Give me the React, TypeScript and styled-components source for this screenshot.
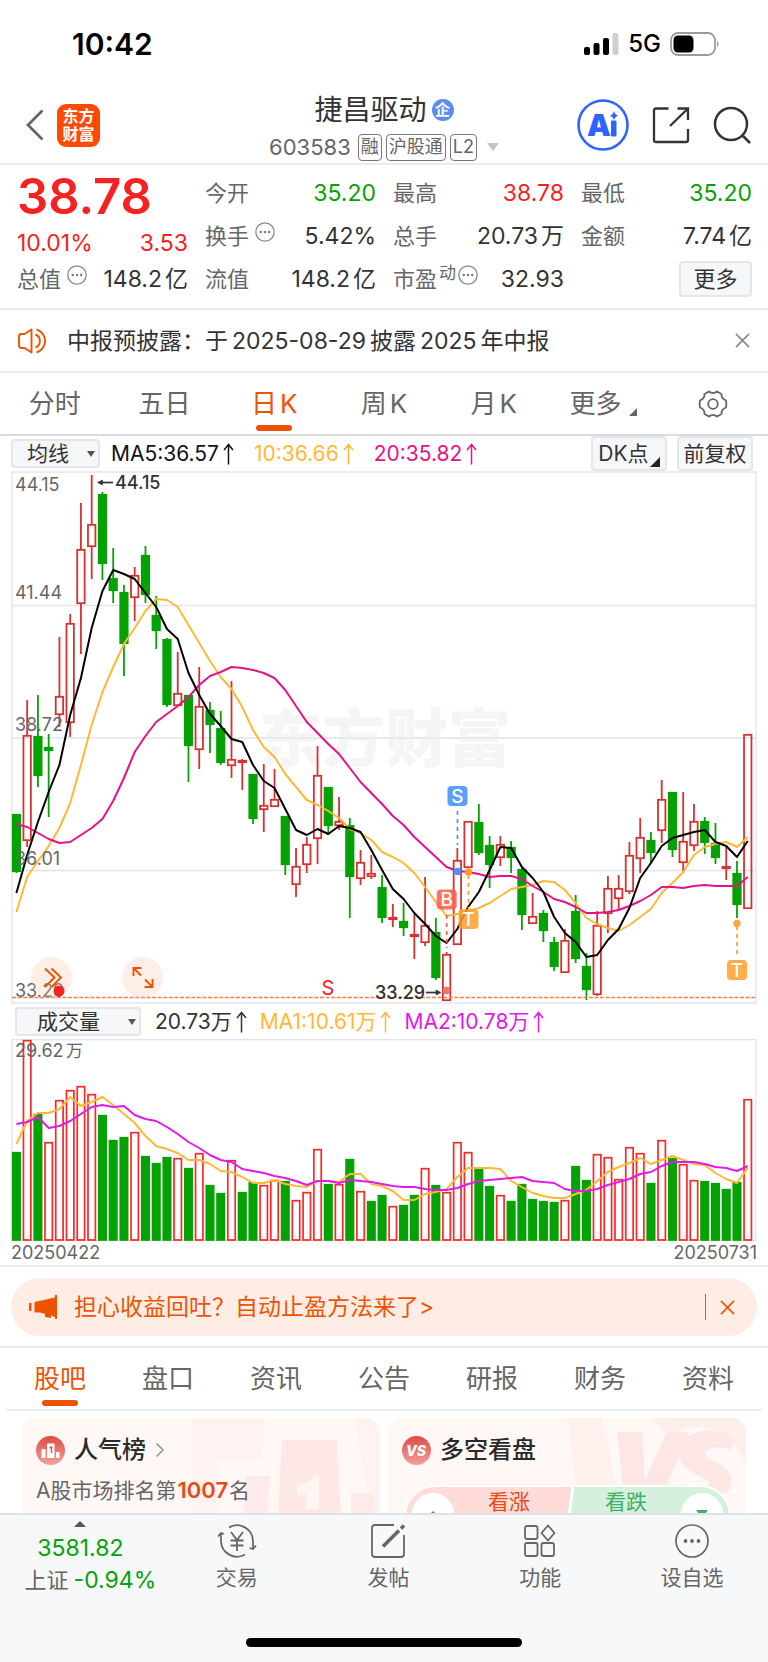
import React from "react";
import styled, { createGlobalStyle, css } from "styled-components";

const RED = "#f52222";
const GREEN = "#05a205";
const ORANGE = "#ee5400";
const AMBER = "#ffb836";
const PINK = "#e6128a";
const PURPLE = "#e21ae8";
const INK = "#333333";
const MUTED = "#666666";

const GlobalStyle = createGlobalStyle`
  * { box-sizing: border-box; }
  body {
    margin: 0;
    background: #ffffff;
    color: ${INK};
    font-family: Inter, "Noto Sans CJK SC", sans-serif;
    font-size: 22px;
    line-height: 30px;
  }
  button, select {
    margin: 0;
    padding: 0;
    border: 0;
    background: none;
    color: inherit;
    font: inherit;
    cursor: pointer;
  }
  a { color: inherit; text-decoration: none; }
  svg { display: block; flex: none; }
  h1, h2, p { margin: 0; font: inherit; }
`;

const Page = styled.div`
  min-height: 100vh;
  display: flex;
  flex-direction: column;
  white-space: nowrap;
  overflow: hidden;
`;

/* ---------- status bar and header ---------- */

const StatusBar = styled.div`
  display: flex;
  align-items: center;
  justify-content: space-between;
  height: 86px;
  padding: 2px 48px 0 72px;
  color: #000000;
`;

const Clock = styled.time`
  font-size: 30px;
  font-weight: 600;
`;

const StatusIcons = styled.div`
  display: flex;
  align-items: center;
  gap: 9px;
  font-size: 24px;
  font-weight: 500;
`;

const Header = styled.header`
  display: grid;
  grid-template-columns: 1fr auto 1fr;
  align-items: center;
  height: 79px;
  padding: 0 17px;
  border-bottom: 2px solid #ececee;
`;

const HeaderSide = styled.div<{ $end?: boolean }>`
  display: flex;
  align-items: center;
  gap: ${(p) => (p.$end ? "23px" : "13px")};
  padding-left: ${(p) => (p.$end ? "0" : "9px")};
  justify-content: ${(p) => (p.$end ? "flex-end" : "flex-start")};
`;

const BrandMark = styled.a`
  display: grid;
  place-content: center;
  width: 43px;
  height: 43px;
  border-radius: 9px;
  background: #ff4a05;
  color: #ffffff;
  font-size: 16px;
  font-weight: 700;
  line-height: 18px;
`;

const TitleBlock = styled.div`
  display: flex;
  flex-direction: column;
  align-items: center;
  padding-top: 4px;
`;

const StockTitle = styled.h1`
  display: flex;
  align-items: center;
  gap: 5px;
  font-size: 28px;
  line-height: 40px;
`;

const CompanyBadge = styled.span`
  display: grid;
  place-content: center;
  width: 22px;
  height: 22px;
  border-radius: 50%;
  background: #5b8eea;
  color: #ffffff;
  font-size: 15px;
  font-weight: 700;
  line-height: 20px;
`;

const CodeRow = styled.div`
  display: flex;
  align-items: center;
  gap: 4px;
  height: 34px;
  color: ${MUTED};
`;

const StockCode = styled.span`
  margin-right: 3px;
  font-size: 22px;
`;

const Tag = styled.span`
  height: 27px;
  padding: 0 2px;
  border: 1px solid #777777;
  border-radius: 4px;
  font-size: 18px;
  line-height: 24px;
`;

const Triangle = styled.span<{ $color: string; $up?: boolean; $size: number }>`
  width: 0;
  height: 0;
  border: ${(p) => p.$size}px solid transparent;
  ${(p) =>
    p.$up
      ? css`border-top: 0; border-bottom-color: ${p.$color};`
      : css`border-bottom: 0; border-top: ${p.$size + 2}px solid ${p.$color};`}
`;

const CodeToggle = styled.button`
  margin-left: 6px;
  display: flex;
`;

/* ---------- quotes ---------- */

const Quotes = styled.section`
  display: grid;
  grid-template-columns: repeat(4, 1fr);
  grid-auto-rows: 43px;
  column-gap: 17px;
  padding: 6px 16px 8px 17px;
  border-bottom: 2px solid #ececee;
`;

const PriceCell = styled.div`
  grid-row: span 2;
  display: flex;
  flex-direction: column;
  color: ${RED};
`;

const Price = styled.strong`
  font-size: 49px;
  font-weight: 600;
  line-height: 52px;
`;

const Change = styled.div`
  display: flex;
  justify-content: space-between;
  padding-top: 5px;
  font-size: 23px;
`;

const Cell = styled.div<{ $end?: boolean }>`
  display: flex;
  align-items: center;
  justify-content: ${(p) => (p.$end ? "flex-end" : "space-between")};
`;

const CellLabel = styled.span`
  display: flex;
  align-items: center;
  gap: 6px;
  color: ${MUTED};

  svg { margin-bottom: 8px; }
`;

const Sup = styled.span`
  margin: 0 -4px 12px -4px;
  font-size: 17px;
`;

const Value = styled.span<{ $color?: string }>`
  display: flex;
  gap: 3px;
  color: ${(p) => p.$color ?? INK};
  font-size: 23px;
`;

const Boxed = styled.button`
  display: flex;
  align-items: center;
  justify-content: center;
  border: 2px solid #e4e6eb;
  border-radius: 4px;
  background: #f6f7f9;
  color: ${INK};
`;

const MoreButton = styled(Boxed)`
  width: 73px;
  height: 36px;
`;

/* ---------- notice ---------- */

const Notice = styled.section`
  display: flex;
  align-items: center;
  height: 63px;
  padding: 0 18px;
  border-bottom: 2px solid #ececee;
  font-size: 23px;
`;

const NoticeText = styled.p`
  flex: 1;
  display: flex;
  gap: 4px;
  margin-left: 19px;
`;

/* ---------- tabs ---------- */

const Tabs = styled.nav<{ $inset?: boolean }>`
  display: grid;
  grid-template-columns: repeat(7, 1fr);
  height: 63px;
  margin: 0 ${(p) => (p.$inset ? "6px" : "0")};
  border-bottom: 2px solid ${(p) => (p.$inset ? "#ececee" : "#d8dae0")};
`;

const Tab = styled.button<{ $active?: boolean }>`
  position: relative;
  display: flex;
  align-items: center;
  justify-content: center;
  gap: 3px;
  font-size: 26px;
  color: ${(p) => (p.$active ? ORANGE : MUTED)};

  ${(p) =>
    p.$active &&
    css`
      &::after {
        content: "";
        position: absolute;
        left: calc(50% - 18px);
        bottom: 3px;
        width: 36px;
        height: 6px;
        border-radius: 3px;
        background: ${ORANGE};
      }
    `}
`;

const MoreCorner = styled.span`
  align-self: flex-end;
  margin: 0 0 18px 5px;
`;

/* ---------- chart toolbars ---------- */

const Toolbar = styled.div<{ $tight?: boolean }>`
  display: flex;
  align-items: center;
  height: 35px;
  padding: 0 15px 0 11px;
  gap: ${(p) => (p.$tight ? "12px" : "19px")};
  font-size: 21px;
`;

const SelectWrap = styled.label<{ $wide?: boolean }>`
  position: relative;
  display: flex;
  align-items: center;
  width: ${(p) => (p.$wide ? "126px" : "89px")};
  margin: ${(p) => (p.$wide ? "0 2px 0 4px" : "0 -8px 0 0")};

  select {
    appearance: none;
    width: 100%;
    height: 29px;
    padding-left: ${(p) => (p.$wide ? "20px" : "14px")};
    border: 2px solid #e4e6eb;
    border-radius: 4px;
    background: #f6f7f9;
    line-height: 24px;
  }

  span {
    position: absolute;
    right: 5px;
    pointer-events: none;
  }
`;

const Reading = styled.span<{ $color: string }>`
  display: flex;
  align-items: center;
  gap: 3px;
  color: ${(p) => p.$color};
`;

const ToolButtons = styled.div`
  display: flex;
  gap: 10px;
  margin-left: auto;
`;

const ToolButton = styled(Boxed)`
  width: 76px;
  height: 35px;
`;

const ToolCorner = styled.span`
  align-self: flex-end;
  margin: 0 0 2px 1px;
`;

/* ---------- charts ---------- */

const ChartArea = styled.section`
  position: relative;
  margin: 0 11px;

  > svg { width: 100%; height: auto; }
`;

const RoundButton = styled.button<{ $left: string }>`
  position: absolute;
  left: ${(p) => p.$left};
  bottom: 6px;
  display: grid;
  place-items: center;
  width: 41px;
  height: 41px;
  border-radius: 50%;
  background: rgba(250, 200, 175, 0.3);
`;

const Dates = styled.div`
  display: flex;
  justify-content: space-between;
  height: 26px;
  padding: 0 11px;
  border-bottom: 2px solid #ececee;
  color: ${MUTED};
  font-size: 18px;
  line-height: 23px;
`;

/* ---------- promotion ---------- */

const PromoStrip = styled.section`
  padding: 11px 11px 10px;
  border-bottom: 2px solid #ececee;
`;

const Promo = styled.div`
  display: flex;
  align-items: center;
  height: 58px;
  padding: 0 22px 0 18px;
  border-radius: 29px;
  background: #feede5;
  color: ${ORANGE};
  font-size: 23px;
`;

const PromoLink = styled.a`
  flex: 1;
  margin-left: 17px;
`;

const PromoClose = styled.button`
  padding-left: 14px;
  border-left: 1px solid ${ORANGE};
  height: 26px;
`;

/* ---------- feed cards ---------- */

const Feed = styled.main`
  flex: 1 0 101px;
  height: 101px;
  display: grid;
  grid-template-columns: 1fr 1fr;
  align-items: start;
  gap: 8px;
  padding: 7px 22px 0;
  overflow: hidden;
`;

const Card = styled.article`
  position: relative;
  height: 140px;
  padding: 14px 14px 0;
  border-radius: 14px;
  background: #fff8f5;
  overflow: hidden;
`;

const CardArt = styled.svg`
  position: absolute;
  top: 0;
  right: 0;
`;

const CardTitle = styled.h2`
  position: relative;
  display: flex;
  align-items: center;
  gap: 9px;
  height: 36px;
  font-size: 24px;
  font-weight: 500;
  color: #2a2a2a;
`;

const CardText = styled.p`
  position: relative;
  margin-top: 7px;
  color: ${MUTED};
  font-size: 21px;

  b {
    margin: 0 1px;
    color: #ea4a17;
    font-size: 22px;
    font-weight: 600;
  }
`;

const Votes = styled.div`
  position: relative;
  display: flex;
  height: 62px;
  margin: 17px 1px 0 2px;
  border: 2px solid #ffffff;
  border-radius: 31px;
  background: linear-gradient(97deg, #ffdcd8 50%, #ffffff 50%, #ffffff 51%, #d5f0dd 51%);
`;

const Vote = styled.button<{ $down?: boolean }>`
  flex: 1;
  display: flex;
  flex-direction: ${(p) => (p.$down ? "row-reverse" : "row")};
  align-items: flex-start;
  justify-content: space-between;
  padding: ${(p) => (p.$down ? "4px 6px 0 35px" : "4px 40px 0 6px")};
  color: ${(p) => (p.$down ? "#3eb065" : "#ea4a17")};
  font-size: 21px;
  line-height: 21px;
`;

const VoteDot = styled.span`
  display: grid;
  place-items: center;
  width: 42px;
  height: 42px;
  margin-top: 2px;
  border-radius: 50%;
  background: #ffffff;
`;

/* ---------- bottom navigation ---------- */

const BottomBar = styled.footer`
  border-top: 2px solid #dfe1e5;
  background: #f7f8fa;
`;

const NavRow = styled.nav`
  display: grid;
  grid-template-columns: 161fr 152fr 152fr 152fr 152fr;
  height: 123px;
  color: ${MUTED};
`;

const IndexItem = styled.a`
  display: flex;
  flex-direction: column;
  align-items: center;
  padding-top: 6px;
  line-height: 32px;

  em {
    color: ${GREEN};
    font-size: 23px;
    font-style: normal;
  }
`;

const IndexValue = styled.em`
  margin-top: 5px;
`;

const IndexChange = styled.span`
  display: flex;
  gap: 5px;
  padding-left: 20px;
`;

const NavItem = styled.button`
  display: flex;
  flex-direction: column;
  align-items: center;
  padding-top: 8px;
  gap: 4px;
  font-size: 21px;
`;

const HomeIndicator = styled.div`
  width: 36%;
  height: 9px;
  margin: 0 auto 15px;
  border-radius: 5px;
  background: #000000;
`;

/* ---------- market data, in chart units ---------- */

type Candle = [kind: "r" | "g", high: number, top: number, bottom: number, low: number];

const candles: Candle[] = [
  ["g", 814, 814, 872, 873], ["r", 700, 735, 841, 847], ["g", 695, 736, 776, 787], ["g", 734, 747, 751, 817],
  ["r", 637, 696, 715, 727], ["r", 614, 623, 723, 737], ["r", 503, 549, 604, 654], ["r", 475, 524, 547, 579],
  ["g", 492, 494, 564, 580], ["g", 548, 578, 591, 603], ["g", 585, 592, 644, 676], ["r", 567, 575, 598, 621],
  ["g", 546, 555, 595, 603], ["g", 596, 615, 631, 649], ["g", 638, 639, 705, 707], ["r", 652, 693, 706, 706],
  ["g", 695, 695, 746, 782], ["r", 667, 706, 750, 769], ["g", 702, 710, 725, 753], ["g", 711, 728, 763, 765],
  ["r", 681, 759, 766, 778], ["r", 759, 760, 763, 790], ["g", 774, 774, 819, 824], ["r", 764, 805, 810, 832],
  ["r", 769, 799, 807, 807], ["g", 816, 816, 865, 875], ["r", 848, 866, 885, 897], ["r", 837, 844, 865, 873],
  ["r", 746, 775, 839, 864], ["g", 787, 787, 826, 835], ["r", 797, 821, 826, 830], ["g", 818, 825, 877, 918],
  ["r", 850, 862, 879, 885], ["r", 855, 873, 877, 879], ["g", 875, 887, 918, 923], ["r", 904, 917, 920, 927],
  ["g", 903, 921, 928, 936], ["r", 914, 934, 937, 959], ["r", 877, 925, 943, 946], ["g", 918, 932, 978, 980],
  ["r", 952, 954, 1001, 1001], ["r", 848, 860, 945, 945], ["r", 821, 821, 868, 868], ["g", 804, 822, 853, 855],
  ["g", 836, 845, 865, 888], ["r", 836, 844, 858, 866], ["g", 841, 847, 858, 873], ["g", 868, 869, 915, 930],
  ["r", 893, 916, 924, 924], ["g", 910, 913, 931, 942], ["g", 937, 942, 967, 971], ["r", 929, 940, 973, 973],
  ["g", 895, 911, 959, 963], ["g", 953, 966, 990, 1000], ["r", 911, 925, 995, 996], ["r", 876, 888, 914, 933],
  ["r", 875, 888, 899, 910], ["r", 842, 855, 892, 894], ["r", 818, 837, 859, 873], ["g", 832, 840, 853, 863],
  ["r", 780, 799, 831, 843], ["g", 792, 792, 850, 857], ["r", 792, 841, 863, 873], ["r", 804, 821, 846, 851],
  ["g", 817, 821, 843, 854], ["g", 823, 843, 858, 864], ["r", 846, 866, 869, 880], ["g", 861, 873, 905, 918],
  ["r", 734, 734, 909, 909],
];

const ma5 = [893, 855, 822, 792, 765, 715, 678, 628, 591, 570, 574, 579, 593, 607, 629, 639, 673, 695, 714, 726, 739, 742, 765, 781, 788, 809, 830, 835, 829, 834, 826, 828, 832, 850, 870, 889, 899, 913, 924, 936, 943, 929, 907, 892, 870, 847, 848, 867, 878, 892, 917, 933, 942, 957, 955, 940, 929, 908, 878, 863, 846, 838, 835, 832, 830, 842, 846, 857, 841];
const ma10 = [912, 877, 861, 846, 828, 803, 765, 725, 692, 667, 644, 628, 611, 599, 600, 607, 625, 643, 661, 677, 689, 707, 730, 747, 757, 774, 787, 800, 805, 811, 818, 829, 833, 840, 852, 857, 863, 873, 887, 902, 916, 914, 911, 908, 903, 896, 889, 887, 885, 881, 882, 890, 903, 918, 924, 928, 931, 925, 917, 909, 893, 883, 872, 855, 847, 844, 842, 847, 837];
const ma20 = [824, 827, 833, 839, 843, 842, 835, 828, 819, 801, 778, 752, 736, 722, 714, 706, 697, 685, 676, 672, 667, 668, 670, 673, 678, 690, 706, 722, 733, 744, 754, 768, 782, 793, 804, 816, 825, 837, 847, 857, 867, 871, 872, 874, 877, 876, 876, 879, 886, 892, 899, 902, 907, 913, 913, 912, 910, 906, 901, 895, 887, 887, 888, 886, 885, 886, 886, 886, 877];

const volumeTops = [1152, 1040, 1114, 1142, 1100, 1090, 1086, 1094, 1115, 1140, 1137, 1132, 1156, 1163, 1157, 1158, 1168, 1153, 1185, 1193, 1160, 1192, 1182, 1185, 1180, 1181, 1200, 1192, 1149, 1184, 1184, 1159, 1191, 1201, 1195, 1206, 1205, 1195, 1168, 1185, 1192, 1142, 1152, 1169, 1186, 1195, 1201, 1184, 1199, 1201, 1202, 1200, 1166, 1180, 1154, 1157, 1179, 1147, 1153, 1183, 1140, 1158, 1164, 1180, 1181, 1183, 1189, 1182, 1099];
const volumeKinds = "grgrrrrrgggrgggrgrggrggrrgrrrgrgrggrggrgrrrggrgggggrggrrrrrgrgrrggggr";
const volMa1 = [1144, 1121, 1113, 1113, 1109, 1097, 1106, 1102, 1097, 1105, 1114, 1123, 1136, 1146, 1149, 1153, 1160, 1160, 1164, 1171, 1172, 1177, 1183, 1183, 1180, 1184, 1186, 1187, 1181, 1181, 1182, 1174, 1174, 1184, 1186, 1191, 1200, 1200, 1194, 1192, 1189, 1177, 1168, 1168, 1168, 1169, 1181, 1187, 1193, 1196, 1198, 1198, 1194, 1190, 1181, 1172, 1167, 1163, 1158, 1164, 1160, 1156, 1160, 1164, 1165, 1173, 1179, 1183, 1168];
const volMa2 = [1124, 1122, 1117, 1128, 1126, 1121, 1114, 1107, 1105, 1107, 1106, 1115, 1119, 1121, 1127, 1134, 1142, 1148, 1155, 1160, 1162, 1169, 1171, 1173, 1176, 1178, 1181, 1185, 1181, 1181, 1183, 1180, 1181, 1182, 1184, 1186, 1187, 1187, 1189, 1190, 1190, 1188, 1184, 1181, 1180, 1179, 1178, 1177, 1181, 1182, 1183, 1189, 1191, 1191, 1189, 1185, 1182, 1179, 1174, 1172, 1166, 1162, 1162, 1162, 1164, 1167, 1168, 1171, 1166];

const xAt = (i: number) => 16.4 + i * 10.755;

function Line({ values, color }: { values: number[]; color: string }) {
  const points = values.map((y, i) => `${xAt(i)},${y}`).join(" ");
  return <polyline points={points} fill="none" stroke={color} strokeWidth="2" strokeLinejoin="round" />;
}

function Marker({ x, y, letter, color }: { x: number; y: number; letter: string; color: string }) {
  return (
    <g>
      <rect x={x - 10} y={y - 10} width="20" height="20" rx="4" fill={color} fillOpacity="0.85" />
      <text x={x} y={y + 6.5} textAnchor="middle" fontSize="19" fontWeight="500" fill="#ffffff">{letter}</text>
    </g>
  );
}

function PriceChart() {
  return (
    <svg viewBox="11 471 746 533" role="img" aria-label="日K线">
      <rect x="12" y="472" width="744" height="531" fill="none" stroke="#e2e4ec" strokeWidth="1.4" />
      {[605.5, 738, 870.5].map((y) => (
        <line key={y} x1="12" x2="756" y1={y} y2={y} stroke="#e2e4ec" strokeWidth="1.4" />
      ))}
      <text x="385" y="761" textAnchor="middle" fontSize="63" fontWeight="900" fill="#f5f5f5">东方财富</text>
      <line x1="261" x2="510" y1="738" y2="738" stroke="#e2e6ec" strokeWidth="1.4" />
      {candles.map(([kind, high, top, bottom, low], i) => {
        const x = xAt(i);
        const color = kind === "r" ? "#d93030" : GREEN;
        return (
          <g key={i} stroke={color} strokeWidth="1.8">
            <line x1={x} x2={x} y1={high} y2={top} />
            <line x1={x} x2={x} y1={bottom} y2={low} />
            <rect
              x={x - 3.7}
              y={top + 0.8}
              width="7.4"
              height={Math.max(bottom - top - 1.6, 1)}
              fill={kind === "r" ? "none" : color}
            />
          </g>
        );
      })}
      <Line values={ma10} color={AMBER} />
      <Line values={ma20} color={PINK} />
      <Line values={ma5} color="#000000" />
      <line x1="12" x2="756" y1="997.5" y2="997.5" stroke="#f08048" strokeWidth="1.6" strokeDasharray="4 1.6" />

      <g fontSize="18" fill={MUTED}>
        <text x="15" y="491">44.15</text>
        <text x="15" y="599">41.44</text>
        <text x="15" y="731">38.72</text>
        <text x="15" y="865">36.01</text>
        <text x="15" y="997">33.29</text>
      </g>

      <g fill={INK} stroke={INK} strokeWidth="1.7">
        <line x1="101" x2="113" y1="482.5" y2="482.5" />
        <path d="M97.5 482.5l5-2.5v5z" strokeWidth="0.6" />
        <line x1="426" x2="437" y1="992.5" y2="992.5" />
        <path d="M441 992.5l-5-2.5v5z" strokeWidth="0.6" />
      </g>
      <g fontSize="18" fontWeight="500" fill={INK}>
        <text x="115" y="489">44.15</text>
        <text x="375" y="999">33.29</text>
      </g>
      <text x="328" y="995" textAnchor="middle" fontSize="20" fill={RED}>S</text>

      <g strokeWidth="1.7" strokeDasharray="4 4">
        <line x1="457.5" x2="457.5" y1="811" y2="845" stroke="#4a90ff" />
        <line x1="468.5" x2="468.5" y1="875" y2="912" stroke="#ff9f2c" />
        <line x1="446.7" x2="446.7" y1="915" y2="948" stroke="#f85a50" />
        <line x1="737" x2="737" y1="926" y2="958" stroke="#ff9f2c" />
      </g>
      <circle cx="457.5" cy="871.5" r="3.7" fill="#4a90ff" />
      <circle cx="468.5" cy="872" r="3.7" fill="#ff9f2c" />
      <circle cx="446.7" cy="990.5" r="3.7" fill="#f87068" />
      <circle cx="737" cy="923.5" r="3.7" fill="#ffa63c" />
      <Marker x={457.5} y={796} letter="S" color="#3f8fff" />
      <Marker x={446.7} y={899.5} letter="B" color="#ff5a4c" />
      <Marker x={468.5} y={919} letter="T" color="#ff9f2c" />
      <Marker x={737} y={970} letter="T" color="#ff9f2c" />
    </svg>
  );
}

function VolumeChart() {
  return (
    <svg viewBox="11 1039 746 202" role="img" aria-label="成交量">
      <rect x="12" y="1039.7" width="744" height="200.6" fill="none" stroke="#e2e4ec" strokeWidth="1.4" />
      {volumeTops.map((top, i) => {
        const rising = volumeKinds[i] === "r";
        return (
          <rect
            key={i}
            x={xAt(i) - 3.7}
            y={top + 0.7}
            width="7.4"
            height={1239.3 - top}
            fill={rising ? "none" : GREEN}
            stroke={rising ? "#ff2626" : GREEN}
            strokeWidth="1.7"
          />
        );
      })}
      <Line values={volMa1} color={AMBER} />
      <Line values={volMa2} color={PURPLE} />
      <text x="15" y="1057" fontSize="18" fill={MUTED}>29.62</text>
      <text x="66" y="1057" fontSize="17" fill={MUTED}>万</text>
    </svg>
  );
}

/* ---------- small icons ---------- */

const EllipsisIcon = () => (
  <svg width="20" height="20" viewBox="0 0 20 20" fill="none" stroke="#8a8a8a" strokeWidth="1.3">
    <circle cx="10" cy="10" r="9.2" />
    <g fill="#777777" stroke="none">
      <circle cx="5.8" cy="10" r="1.2" />
      <circle cx="10" cy="10" r="1.2" />
      <circle cx="14.2" cy="10" r="1.2" />
    </g>
  </svg>
);

const UpArrow = () => (
  <svg width="13" height="22" viewBox="0 0 13 22" fill="none" stroke="currentColor" strokeWidth="1.5">
    <path d="M6.5 21.5V2M2 7l4.500-5.500L11 7" />
  </svg>
);

const Cross = ({ size, color }: { size: number; color: string }) => (
  <svg width={size} height={size} viewBox="0 0 16 16" fill="none" stroke={color} strokeWidth="1.7">
    <path d="M1 1l14 14M15 1L1 15" />
  </svg>
);

const Corner = ({ size, color }: { size: number; color: string }) => (
  <svg width={size} height={size} viewBox="0 0 10 10">
    <path d="M10 0v10H0z" fill={color} />
  </svg>
);

const GearIcon = () => (
  <svg width="30" height="28" viewBox="0 0 30 28" fill="none" stroke={MUTED} strokeWidth="1.8" strokeLinejoin="round">
    <path d="M11 1.5Q15 4.5 19 1.5L23.5 4Q23 8.500 28 10.5Q28.8 14 28 17.5Q23 19.5 23.5 24L19 26.5Q15 23.5 11 26.5L6.5 24Q7 19.5 2 17.5Q1.2 14 2 10.5Q7 8.5 6.5 4Z" />
    <circle cx="15" cy="14" r="4.8" />
  </svg>
);

const quotes: { label: string; value: string; unit?: string; color?: string; info?: boolean; sup?: string }[] = [
  { label: "今开", value: "35.20", color: GREEN },
  { label: "最高", value: "38.78", color: RED },
  { label: "最低", value: "35.20", color: GREEN },
  { label: "换手", value: "5.42%", info: true },
  { label: "总手", value: "20.73", unit: "万" },
  { label: "金额", value: "7.74", unit: "亿" },
  { label: "总值", value: "148.2", unit: "亿", info: true },
  { label: "流值", value: "148.2", unit: "亿" },
  { label: "市盈", value: "32.93", info: true, sup: "动" },
];

export default function App() {
  return (
    <Page>
      <GlobalStyle />
      <StatusBar>
        <Clock>10:42</Clock>
        <StatusIcons>
          <svg width="35" height="23" viewBox="0 0 35 23">
            <rect x="0" y="14" width="6" height="8" rx="2" />
            <rect x="9.5" y="10" width="6" height="12" rx="2" />
            <rect x="19" y="5" width="6" height="17" rx="2" />
            <rect x="28.5" y="0" width="6" height="22" rx="2" fill="#cfcfcf" />
          </svg>
          <span>5G</span>
          <svg width="50" height="24" viewBox="0 0 50 24">
            <rect x="1" y="1" width="44" height="22" rx="7" fill="none" stroke="#9b9b9b" strokeWidth="1.8" />
            <rect x="3.5" y="3.5" width="20" height="17" rx="4.5" />
            <path d="M47 8.500q3 3.500 0 7z" fill="#9b9b9b" />
          </svg>
        </StatusIcons>
      </StatusBar>

      <Header>
        <HeaderSide>
          <button aria-label="返回">
            <svg width="18" height="32" viewBox="0 0 18 32" fill="none" stroke="#666666" strokeWidth="2.8">
              <path d="M16.5 1.5L2 16l14.5 14.5" />
            </svg>
          </button>
          <BrandMark href="#home">
            <span>东方</span>
            <span>财富</span>
          </BrandMark>
        </HeaderSide>
        <TitleBlock>
          <StockTitle>
            捷昌驱动
            <CompanyBadge>企</CompanyBadge>
          </StockTitle>
          <CodeRow>
            <StockCode>603583</StockCode>
            <Tag>融</Tag>
            <Tag>沪股通</Tag>
            <Tag>L2</Tag>
            <CodeToggle aria-label="展开">
              <Triangle $color="#c4c4c4" $size={6} />
            </CodeToggle>
          </CodeRow>
        </TitleBlock>
        <HeaderSide $end>
          <button aria-label="Ai">
            <svg width="52" height="52" viewBox="0 0 52 52">
              <circle cx="26" cy="26" r="24.5" fill="none" stroke="#2f63ff" strokeWidth="2.6" />
              <text x="10" y="37" fontSize="30" fontWeight="900" fill="#2f63ff">A</text>
              <rect x="34" y="21.5" width="5.5" height="16" rx="1" fill="#2f63ff" />
              <path d="M37 12q1 4 4.5 4.8q-3.5 0.8-4.5 4.2q-1-3.4-4.5-4.2q3.5-0.8 4.5-4.8z" fill="#2f63ff" />
            </svg>
          </button>
          <button aria-label="分享">
            <svg width="38" height="38" viewBox="0 0 38 38" fill="none" stroke="#333333" strokeWidth="2.3">
              <path d="M16.5 2.5H4Q2 2.5 2 4.5V34q0 2 2 2H34q2 0 2-2V23" />
              <path d="M18 20L36 2.5M25.5 2.5H36V14" />
            </svg>
          </button>
          <button aria-label="搜索">
            <svg width="38" height="38" viewBox="0 0 38 38" fill="none" stroke="#333333" strokeWidth="2.5">
              <circle cx="18" cy="18" r="16" />
              <path d="M29 29l8 8" />
            </svg>
          </button>
        </HeaderSide>
      </Header>

      <Quotes>
        <PriceCell>
          <Price>38.78</Price>
          <Change>
            <span>10.01%</span>
            <span>3.53</span>
          </Change>
        </PriceCell>
        {quotes.map((quote) => (
          <Cell key={quote.label}>
            <CellLabel>
              {quote.label}
              {quote.sup && <Sup>{quote.sup}</Sup>}
              {quote.info && <EllipsisIcon />}
            </CellLabel>
            <Value $color={quote.color}>
              <span>{quote.value}</span>
              {quote.unit && <span>{quote.unit}</span>}
            </Value>
          </Cell>
        ))}
        <Cell $end>
          <MoreButton>更多</MoreButton>
        </Cell>
      </Quotes>

      <Notice>
        <svg width="30" height="26" viewBox="0 0 30 26" fill="none" stroke={ORANGE} strokeWidth="1.9" strokeLinejoin="round">
          <path d="M13.5 1.5V24.5L6.5 20H3.5Q1 20 1 17.5V8.5Q1 6 3.5 6H6.5Z" />
          <path d="M17.5 6.5a7 7 0 0 1 0 13M18.5 1.5a12 12 0 0 1 0 23" />
        </svg>
        <NoticeText>
          <span>中报预披露：于</span>
          <span>2025-08-29</span>
          <span>披露</span>
          <span>2025</span>
          <span>年中报</span>
        </NoticeText>
        <button aria-label="关闭公告">
          <Cross size={15} color="#888888" />
        </button>
      </Notice>

      <Tabs>
        <Tab>分时</Tab>
        <Tab>五日</Tab>
        <Tab $active><span>日</span><span>K</span></Tab>
        <Tab><span>周</span><span>K</span></Tab>
        <Tab><span>月</span><span>K</span></Tab>
        <Tab>
          更多
          <MoreCorner><Corner size={8} color={MUTED} /></MoreCorner>
        </Tab>
        <Tab aria-label="设置"><GearIcon /></Tab>
      </Tabs>

      <Toolbar>
        <SelectWrap>
          <select aria-label="指标" defaultValue="ma">
            <option value="ma">均线</option>
          </select>
          <Triangle $color="#555555" $size={4} />
        </SelectWrap>
        <Reading $color="#111111">MA5:36.57<UpArrow /></Reading>
        <Reading $color={AMBER}>10:36.66<UpArrow /></Reading>
        <Reading $color={PINK}>20:35.82<UpArrow /></Reading>
        <ToolButtons>
          <ToolButton>
            DK点
            <ToolCorner><Corner size={10} color="#222222" /></ToolCorner>
          </ToolButton>
          <ToolButton>前复权</ToolButton>
        </ToolButtons>
      </Toolbar>

      <ChartArea>
        <PriceChart />
        <RoundButton $left="20px" aria-label="快进">
          <svg width="41" height="41" viewBox="0 0 41 41" fill="none" stroke={ORANGE} strokeWidth="1.9">
            <path d="M14 11.5l9.5 9L14 30M20.5 11.5l9.5 9-9.5 9.500" />
            <circle cx="28" cy="34" r="5.5" fill={RED} stroke="none" />
          </svg>
        </RoundButton>
        <RoundButton $left="111px" aria-label="全屏">
          <svg width="41" height="41" viewBox="0 0 41 41" fill="none" stroke={ORANGE} strokeWidth="1.9">
            <path d="M11.5 19v-8h8M11.5 11l7.5 7.5M30.5 22v8h-8M30.5 30L23 22.5" />
          </svg>
        </RoundButton>
      </ChartArea>

      <Toolbar $tight>
        <SelectWrap $wide>
          <select aria-label="副图指标" defaultValue="vol">
            <option value="vol">成交量</option>
          </select>
          <Triangle $color="#555555" $size={4} />
        </SelectWrap>
        <Reading $color={INK}>20.73万<UpArrow /></Reading>
        <Reading $color={AMBER}>MA1:10.61万<UpArrow /></Reading>
        <Reading $color={PURPLE}>MA2:10.78万<UpArrow /></Reading>
      </Toolbar>
      <ChartArea>
        <VolumeChart />
      </ChartArea>
      <Dates>
        <time>20250422</time>
        <time>20250731</time>
      </Dates>

      <PromoStrip>
        <Promo>
          <svg width="28" height="24" viewBox="0 0 28 24" fill={ORANGE}>
            <path d="M26 0h2v24h-2v-2l-4-1.5V23l-6-1v-3l-5-1.5H5.5V7L26 2.5z" />
            <rect x="0" y="8" width="2.5" height="8" />
          </svg>
          <PromoLink href="#promo">担心收益回吐？自动止盈方法来了&gt;</PromoLink>
          <PromoClose aria-label="关闭">
            <Cross size={15} color={ORANGE} />
          </PromoClose>
        </Promo>
      </PromoStrip>

      <Tabs $inset>
        <Tab $active>股吧</Tab>
        <Tab>盘口</Tab>
        <Tab>资讯</Tab>
        <Tab>公告</Tab>
        <Tab>研报</Tab>
        <Tab>财务</Tab>
        <Tab>资料</Tab>
      </Tabs>

      <Feed>
        <Card>
          <CardArt width="188" height="95" viewBox="0 0 188 95" aria-hidden="true">
            <path d="M0 0H73L70 42H25V95H0z" fill="#fef3f0" />
            <path d="M163 0h25v95h-10z" fill="#fef3f0" />
            <path d="M90 22h55l4 73H86z" fill="#fde8e5" />
            <path d="M54 58h24l-3 37H52zM159 75h22l2 20h-24z" fill="#feebe9" />
            <path d="M105 68q14-4 17-11h5v34h-13V76l-9 2z" fill="#fff6f3" />
          </CardArt>
          <CardTitle>
            <svg width="29" height="29" viewBox="0 0 29 29">
              <defs>
                <linearGradient id="rankFill" x1="0" y1="0" x2="0" y2="1">
                  <stop offset="0" stopColor="#df4a45" />
                  <stop offset="1" stopColor="#f3a19b" />
                </linearGradient>
              </defs>
              <circle cx="14.5" cy="14.5" r="14.5" fill="url(#rankFill)" />
              <path d="M5.5 13h4v9h-4zM11 7.5h7.5V22H11zM20 16h3.5v6H20z" fill="#ffffff" />
              <path d="M13.5 12l2-1v6" fill="none" stroke="#df5a55" strokeWidth="1.5" />
            </svg>
            人气榜
            <svg width="10" height="16" viewBox="0 0 10 16" fill="none" stroke="#999999" strokeWidth="1.7">
              <path d="M1.5 1.5L8 8l-6.5 6.5" />
            </svg>
          </CardTitle>
          <CardText>A股市场排名第<b>1007</b>名</CardText>
        </Card>
        <Card>
          <CardArt width="178" height="95" viewBox="0 0 178 95" aria-hidden="true">
            <path d="M0 0h34l14 70H8z" fill="#fef0ed" />
            <path d="M85 0h93v45q-20-40-55-35-15 0-22 10z" fill="#feefec" />
            <path d="M49 14h25l3 48 22-48h22L98 69H55z" fill="#fde6e4" />
            <path d="M166 20q-26-16-48 0-14 13-3 27 10 9 28 18l-10 10h26q11-16-5-28-22-10-15-15 9-6 24 0z" fill="#fde8e5" />
          </CardArt>
          <CardTitle>
            <svg width="29" height="29" viewBox="0 0 29 29">
              <circle cx="14.5" cy="14.5" r="14.5" fill="url(#rankFill)" />
              <text x="14" y="20" textAnchor="middle" fontSize="14" fontWeight="800" fontStyle="italic" fill="#ffffff">VS</text>
            </svg>
            多空看盘
          </CardTitle>
          <Votes>
            <Vote>
              <VoteDot>
                <Triangle $color="#ea4a17" $size={7} $up />
              </VoteDot>
              看涨
            </Vote>
            <Vote $down>
              <VoteDot>
                <Triangle $color="#3eb065" $size={6} />
              </VoteDot>
              看跌
            </Vote>
          </Votes>
        </Card>
      </Feed>

      <BottomBar>
        <NavRow>
          <IndexItem href="#index">
            <Triangle $color="#555555" $size={6} $up />
            <IndexValue>3581.82</IndexValue>
            <IndexChange>上证<em>-0.94%</em></IndexChange>
          </IndexItem>
          <NavItem>
            <svg width="40" height="36" viewBox="0 0 40 36" fill="none" stroke={MUTED} strokeWidth="1.8">
              <path d="M12 4.5A16 16 0 0 1 36 18V25M28 31.5A16 16 0 0 1 4 18V11" />
              <path d="M1 13.5l3-3.5 3 1M39 22.5L36 26l-3.5-1" />
              <path d="M14 9l6 8 6-8M20 17v11M13.5 17.5h13M13.5 22.5h13" />
            </svg>
            交易
          </NavItem>
          <NavItem>
            <svg width="36" height="36" viewBox="0 0 36 36" fill="none" stroke={MUTED} strokeWidth="1.8">
              <path d="M24 2H5Q2 2 2 5V31q0 3 3 3H31q3 0 3-3V12" />
              <path d="M13 23.5L29 7.5M31 5.5L34 2.500" strokeWidth="3.6" />
            </svg>
            发帖
          </NavItem>
          <NavItem>
            <svg width="36" height="36" viewBox="0 0 36 36" fill="none" stroke={MUTED} strokeWidth="1.8">
              <rect x="3" y="3" width="12.5" height="13" rx="2" />
              <rect x="3" y="20" width="12.5" height="13" rx="2" />
              <rect x="19.5" y="20" width="12.5" height="13" rx="2" />
              <path d="M26 2.5l6.5 7.5-6.5 7.5-6.5-7.5z" strokeLinejoin="round" />
            </svg>
            功能
          </NavItem>
          <NavItem>
            <svg width="36" height="36" viewBox="0 0 36 36" fill="none" stroke={MUTED} strokeWidth="1.7">
              <circle cx="18" cy="18" r="16" />
              <g fill={MUTED} stroke="none">
                <circle cx="11.5" cy="18" r="1.9" />
                <circle cx="18" cy="18" r="1.9" />
                <circle cx="24.5" cy="18" r="1.9" />
              </g>
            </svg>
            设自选
          </NavItem>
        </NavRow>
        <HomeIndicator />
      </BottomBar>
    </Page>
  );
}
